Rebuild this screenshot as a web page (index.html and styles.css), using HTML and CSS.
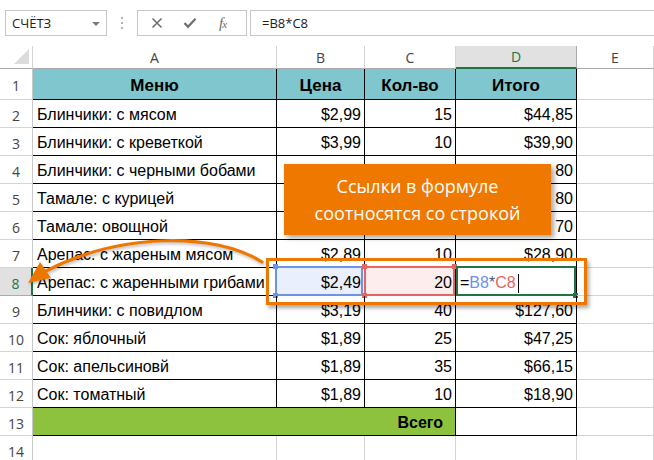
FILE: index.html
```html
<!DOCTYPE html>
<html lang="ru">
<head>
<meta charset="utf-8">
<title>Excel</title>
<link rel="stylesheet" href="styles.css">
</head>
<body>
<div class="app">
  <div class="fbar">
    <div class="namebox"><span class="nbtext">СЧЁТЗ</span><span class="caret"></span></div>
    <div class="dots"><svg width="4" height="14" viewBox="0 0 4 14"><circle cx="2" cy="2" r="1" fill="#9a9a9a"/><circle cx="2" cy="7" r="1" fill="#9a9a9a"/><circle cx="2" cy="12" r="1" fill="#9a9a9a"/></svg></div>
    <div class="fxbox">
      <svg class="ico ico-x" width="12" height="12" viewBox="0 0 12 12"><path d="M1.5 1.5 L10.5 10.5 M10.5 1.5 L1.5 10.5" stroke="#707070" stroke-width="1.6"/></svg>
      <svg class="ico ico-ok" width="14" height="12" viewBox="0 0 14 12"><path d="M1.5 6 L5 9.8 L12.5 1.8" stroke="#707070" stroke-width="2.2" fill="none"/></svg>
      <span class="fx">f<span class="fxx">x</span></span>
    </div>
    <div class="finput">=B8*C8</div>
  </div>

  <div class="sheet">
    <div class="corner"><span class="tri"></span></div>
    <div class="ch">A</div><div class="ch">B</div><div class="ch">C</div><div class="ch ch-act">D</div><div class="ch">E</div>

    <div class="rh">1</div>
    <div class="c t hd">Меню</div><div class="c t hd">Цена</div><div class="c t hd">Кол-во</div><div class="c t hd">Итого</div><div class="c"></div>

    <div class="rh">2</div>
    <div class="c t">Блинчики: с мясом</div><div class="c t n">$2,99</div><div class="c t n">15</div><div class="c t n">$44,85</div><div class="c"></div>

    <div class="rh">3</div>
    <div class="c t">Блинчики: с креветкой</div><div class="c t n">$3,99</div><div class="c t n">10</div><div class="c t n">$39,90</div><div class="c"></div>

    <div class="rh">4</div>
    <div class="c t">Блинчики: с черными бобами</div><div class="c t n"></div><div class="c t n"></div><div class="c t n">80</div><div class="c"></div>

    <div class="rh">5</div>
    <div class="c t">Тамале: с курицей</div><div class="c t n"></div><div class="c t n"></div><div class="c t n">80</div><div class="c"></div>

    <div class="rh">6</div>
    <div class="c t">Тамале: овощной</div><div class="c t n"></div><div class="c t n"></div><div class="c t n">70</div><div class="c"></div>

    <div class="rh">7</div>
    <div class="c t">Арепас: с жареным мясом</div><div class="c t n">$2,89</div><div class="c t n">10</div><div class="c t n">$28,90</div><div class="c"></div>

    <div class="rh rh-act">8</div>
    <div class="c t">Арепас: с жаренными грибами</div>
    <div class="c t n sel-b">$2,49<span class="hl hl-b"><i class="sq sq-tl b"></i><i class="sq sq-bl b"></i></span></div>
    <div class="c t n sel-c">20<span class="hl hl-c"><i class="sq sq-tl r"></i><i class="sq sq-bl r"></i><i class="sq sq-tr r"></i></span></div>
    <div class="c t edit">=<span class="rb">B8</span><span class="op">*</span><span class="rc">C8</span><span class="cursor"></span><span class="hl hl-d"><i class="sq sq-br g"></i></span></div>
    <div class="c"></div>

    <div class="rh">9</div>
    <div class="c t">Блинчики: с повидлом</div><div class="c t n">$3,19</div><div class="c t n">40</div><div class="c t n">$127,60</div><div class="c"></div>

    <div class="rh">10</div>
    <div class="c t">Сок: яблочный</div><div class="c t n">$1,89</div><div class="c t n">25</div><div class="c t n">$47,25</div><div class="c"></div>

    <div class="rh">11</div>
    <div class="c t">Сок: апельсиновй</div><div class="c t n">$1,89</div><div class="c t n">35</div><div class="c t n">$66,15</div><div class="c"></div>

    <div class="rh">12</div>
    <div class="c t">Сок: томатный</div><div class="c t n">$1,89</div><div class="c t n">10</div><div class="c t n">$18,90</div><div class="c"></div>

    <div class="rh">13</div>
    <div class="c t tot">Всего</div><div class="c t"></div><div class="c"></div>

    <div class="rh">14</div>
    <div class="c"></div><div class="c"></div><div class="c"></div><div class="c"></div><div class="c"></div>
  </div>

  <div class="rowframe"></div>

  <svg class="arrow" width="654" height="460" viewBox="0 0 654 460">
    <path d="M262 262 C 215 232, 120 232, 44 272" stroke="#ee7700" stroke-width="3.2" fill="none" stroke-linecap="round"/>
    <path d="M28 283 L40 262 L51 278 Z" fill="#ee7700"/>
  </svg>

  <div class="callout">Ссылки в формуле<br>соотносятся со строкой</div>
</div>
</body>
</html>
```

FILE: styles.css
```css
* { box-sizing: border-box; }
html, body { margin: 0; padding: 0; background: #fff; }
body { width: 654px; height: 460px; overflow: hidden; }

.app {
  position: relative;
  width: 654px;
  height: 460px;
  overflow: hidden;
  font-family: "Liberation Sans", Arial, sans-serif;
}

/* ---------- formula bar ---------- */
.fbar {
  display: flex;
  align-items: stretch;
  height: 46px;
  padding: 10px 0 10px 5px;
}
.namebox {
  width: 102px;
  border: 1px solid #c6c6c6;
  display: flex;
  align-items: center;
  justify-content: space-between;
  padding: 0 6px 0 6px;
  font-family: "Open Sans", "Liberation Sans", sans-serif;
  font-size: 13px;
  color: #222;
}
.caret {
  width: 0; height: 0;
  border-left: 4px solid transparent;
  border-right: 4px solid transparent;
  border-top: 4px solid #7a7a7a;
  margin-top: 1px;
}
.dots {
  width: 30px;
  display: flex;
  align-items: center;
  justify-content: center;
}
.fxbox {
  width: 110px;
  border: 1px solid #c6c6c6;
  display: flex;
  align-items: center;
  padding-left: 13px;
}
.ico-ok { margin-left: 20px; }
.fx {
  margin-left: 22px;
  font-family: "Liberation Serif", "Times New Roman", serif;
  font-style: italic;
  font-size: 15px;
  color: #6a6a6a;
  letter-spacing: -1px;
}
.fxx { font-size: 11px; }
.finput {
  flex: 1;
  margin-left: 3px;
  border-top: 1px solid #c6c6c6;
  border-bottom: 1px solid #c6c6c6;
  border-left: 1px solid #c6c6c6;
  display: flex;
  align-items: center;
  padding-left: 11px;
  font-family: "Open Sans", "Liberation Sans", sans-serif;
  font-size: 13px;
  color: #222;
}

/* ---------- sheet grid ---------- */
.sheet {
  display: grid;
  grid-template-columns: 33px 244px 88px 91px 121px 1fr;
  grid-template-rows: 23px 31px repeat(13, 28px);
}
.corner {
  border-right: 1px solid #d4d4d4;
  border-bottom: 1px solid #ababab;
  position: relative;
}
.tri {
  position: absolute;
  right: 3px;
  bottom: 4px;
  width: 0; height: 0;
  border-left: 15px solid transparent;
  border-bottom: 15px solid #dcdcdc;
}
.ch {
  border-right: 1px solid #d4d4d4;
  border-bottom: 1px solid #ababab;
  display: flex;
  align-items: center;
  justify-content: center;
  font-family: "Open Sans", "Liberation Sans", sans-serif;
  font-size: 14px;
  color: #444;
}
.ch-act {
  background: #e1e1e1;
  color: #217346;
  border-right-color: #ababab;
  border-bottom: 2px solid #217346;
}
.rh {
  border-right: 1px solid #c8c8c8;
  border-bottom: 1px solid #d4d4d4;
  display: flex;
  align-items: center;
  justify-content: center;
  padding-top: 3px;
  font-family: "Open Sans", "Liberation Sans", sans-serif;
  font-size: 14px;
  color: #444;
}
.rh-act {
  background: #e1e1e1;
  color: #217346;
  border-right: 2px solid #217346;
  border-bottom-color: #ababab;
}

.c {
  position: relative;
  border-right: 1px solid #d4d4d4;
  border-bottom: 1px solid #d4d4d4;
  display: flex;
  align-items: center;
  padding: 3px 4px 0 4px;
  font-size: 16px;
  color: #000;
  white-space: nowrap;
}
.t {
  border-right-color: #000;
  border-bottom-color: #000;
}
.n { justify-content: flex-end; padding-right: 3px; }
.hd {
  background: #7fc6cf;
  font-weight: bold;
  justify-content: center;
  font-size: 17px;
}
.tot {
  grid-column: span 3;
  background: #8dc23f;
  font-weight: bold;
  justify-content: flex-end;
  padding-right: 12px;
}

/* ---------- row 8 highlights ---------- */
.sel-b { background: #e9effc; }
.sel-c { background: #fdeded; }
.hl {
  position: absolute;
  top: -2px;
  bottom: -1px;
  left: -2px;
  right: -1px;
  border: 2px solid;
  pointer-events: none;
}
.hl-b { border-color: #6c93e6; right: 1px; }
.hl-c { border-color: #e86563; left: -1px; right: 0; }
.hl-d { border-color: #217346; left: 0; right: 0; }
.sq {
  position: absolute;
  width: 5px;
  height: 5px;
}
.sq.b { background: #6c93e6; }
.sq.r { background: #e86563; }
.sq.g { background: #217346; }
.sq-tl { top: -4px; left: -4px; }
.sq-bl { bottom: -4px; left: -4px; }
.sq-tr { top: -4px; right: -4px; }
.sq-br { bottom: -4px; right: -4px; }

.edit { padding-left: 4px; }
.rb { color: #6c93e6; }
.rc { color: #e86563; }
.op { color: #4a5a7a; }
.cursor {
  display: inline-block;
  width: 1px;
  height: 19px;
  background: #000;
  margin-left: 2px;
}

/* ---------- overlays ---------- */
.rowframe {
  position: absolute;
  left: 266px;
  top: 258px;
  width: 321px;
  height: 47px;
  border: 3px solid #ee7700;
  box-shadow: 2px 3px 4px rgba(0, 0, 0, 0.35);
  pointer-events: none;
}
.arrow {
  position: absolute;
  left: 0;
  top: 0;
  pointer-events: none;
  filter: drop-shadow(1px 2px 1.5px rgba(0, 0, 0, 0.25));
}
.callout {
  position: absolute;
  left: 284px;
  top: 164px;
  width: 267px;
  height: 71px;
  background: #ef7800;
  color: #fff;
  font-family: "Open Sans", "Liberation Sans", sans-serif;
  font-size: 18px;
  line-height: 27px;
  text-align: center;
  padding-top: 9px;
  box-shadow: 3px 3px 5px rgba(0, 0, 0, 0.35);
}
```
